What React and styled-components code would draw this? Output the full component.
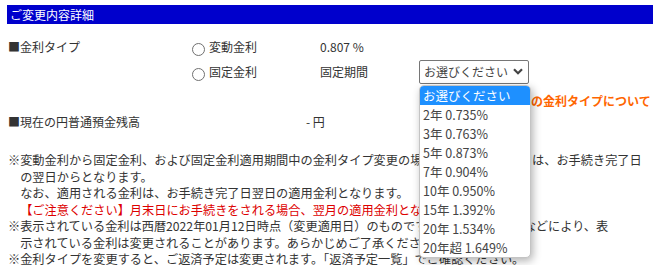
import React from 'react';
import styled, { createGlobalStyle } from 'styled-components';

const GlobalStyle = createGlobalStyle`
  html, body {
    margin: 0;
    padding: 0;
    background: #fff;
    overflow: hidden;
  }
  body {
    font-family: "Noto Sans CJK JP", "Noto Sans", sans-serif;
    font-size: 12px;
    color: #333;
  }
`;

const Page = styled.div`
  width: 720px;
  padding: 5px 0 0 8px;
`;

const Heading = styled.div`
  margin-left: -1px;
  height: 19px;
  line-height: 19px;
  padding-left: 3px;
  background-color: #0000cc;
  color: #fff;
  font-size: 12px;
`;

const Form = styled.div`
  margin-top: 10px;
`;

const FieldRow = styled.div`
  display: grid;
  grid-template-columns: 184px 128px 99px auto;
  align-items: center;
  height: ${(p) => p.$height || 25}px;
`;

const Label = styled.div`
  white-space: nowrap;
`;

const RadioLabel = styled.label`
  display: flex;
  align-items: center;
  gap: 4px;
  white-space: nowrap;
`;

const Radio = styled.span`
  width: 11px;
  height: 11px;
  border: 1px solid #707070;
  border-radius: 50%;
  margin-top: 5px;
  flex: none;
`;

const Value = styled.div`
  white-space: nowrap;
  padding-left: ${(p) => p.$indent || 0}px;
`;

const SelectWrap = styled.div`
  position: relative;
  width: 110px;
  height: 24px;
`;

const SelectBox = styled.div`
  box-sizing: border-box;
  height: 24px;
  border: 1px solid #767676;
  border-radius: 2px;
  display: flex;
  align-items: center;
  justify-content: space-between;
  padding: 0 5px 0 4px;
  font-size: 12px;
  color: #444;
`;

const OptionList = styled.div`
  position: absolute;
  top: 25px;
  left: 0;
  z-index: 5;
  box-sizing: border-box;
  width: 112px;
  background: #fff;
  border: 1px solid #c4c4c4;
  border-radius: 5px;
  overflow: hidden;
  box-shadow: 2px 3px 9px rgba(0, 0, 0, 0.3);
`;

const Option = styled.div`
  height: 19px;
  line-height: 19px;
  padding-left: 3px;
  white-space: nowrap;
  font-size: 12.5px;
  color: ${(p) => (p.$active ? '#fff' : '#444')};
  background: ${(p) => (p.$active ? '#1e90ff' : 'transparent')};
`;

const LinkRow = styled.div`
  height: 20px;
  line-height: 20px;
  margin-top: 7px;
  padding-left: 499px;
  white-space: nowrap;
`;

const GuideLink = styled.span`
  color: #ff6600;
  font-weight: bold;
  font-size: 12px;
`;

const Notes = styled.div`
  margin-top: 21px;
  line-height: 16.5px;
  font-size: 12.2px;
  white-space: nowrap;
`;

const Note = styled.div`
  padding-left: 1em;
  text-indent: -1em;
`;

const Warning = styled.span`
  color: #dd0000;
`;

const Chevron = () => (
  <svg width="10" height="7" viewBox="0 0 10 7">
    <path d="M1 1.2 L5 5.2 L9 1.2" fill="none" stroke="#444" strokeWidth="2.2" />
  </svg>
);

const periods = [
  'お選びください',
  '2年 0.735%',
  '3年 0.763%',
  '5年 0.873%',
  '7年 0.904%',
  '10年 0.950%',
  '15年 1.392%',
  '20年 1.534%',
  '20年超 1.649%',
];

const App = () => {
  return (
    <Page>
      <GlobalStyle />
      <Heading>ご変更内容詳細</Heading>
      <Form>
        <FieldRow>
          <Label>■金利タイプ</Label>
          <RadioLabel>
            <Radio />
            変動金利
          </RadioLabel>
          <Value>0.807 %</Value>
        </FieldRow>
        <FieldRow>
          <span />
          <RadioLabel>
            <Radio />
            固定金利
          </RadioLabel>
          <Value>固定期間</Value>
          <SelectWrap>
            <SelectBox>
              お選びください
              <Chevron />
            </SelectBox>
            <OptionList>
              {periods.map((p, i) => (
                <Option key={p} $active={i === 0}>
                  {p}
                </Option>
              ))}
            </OptionList>
          </SelectWrap>
        </FieldRow>
        <LinkRow>
          <GuideLink>現在の金利タイプについて</GuideLink>
        </LinkRow>
        <FieldRow $height={20}>
          <Label>■現在の円普通預金残高</Label>
          <Value $indent={114}>- 円</Value>
        </FieldRow>
      </Form>
      <Notes>
        <Note>
          ※変動金利から固定金利、および固定金利適用期間中の金利タイプ変更の場合、変更金利の適用は、お手続き完了日
          <br />
          の翌日からとなります。
          <br />
          なお、適用される金利は、お手続き完了日翌日の適用金利となります。
          <br />
          <Warning>【ご注意ください】月末日にお手続きをされる場合、翌月の適用金利となります。</Warning>
        </Note>
        <Note>
          ※表示されている金利は西暦2022年01月12日時点（変更適用日）のものです。金利情勢の変化などにより、表
          <br />
          示されている金利は変更されることがあります。あらかじめご了承ください。
        </Note>
        <Note>※金利タイプを変更すると、ご返済予定は変更されます。「返済予定一覧」でご確認ください。</Note>
      </Notes>
    </Page>
  );
};

export default App;
